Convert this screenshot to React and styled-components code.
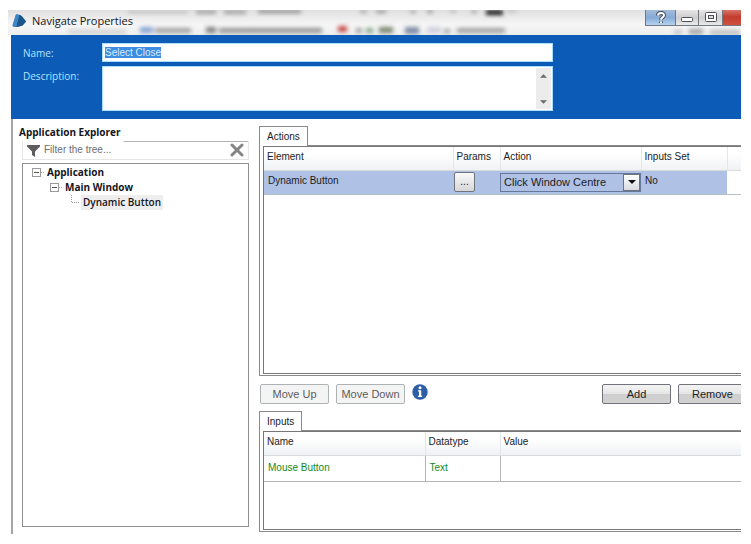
import React, { useState } from 'react'
import styled, { createGlobalStyle, css } from 'styled-components'

const GlobalStyle = createGlobalStyle`
  * {
    box-sizing: border-box;
  }
  body {
    margin: 0;
    background: #fff;
    color: #1c1c24;
    font: 10px/16px 'Liberation Sans', Arial, sans-serif;
  }
  button, input, textarea, select {
    font: inherit;
    color: inherit;
    margin: 0;
    border-radius: 0;
  }
`

const segoe = css`
  font-family: 'Open Sans', 'Noto Sans', sans-serif;
`

const Page = styled.div`
  display: flex;
  min-height: 100vh;
  padding: 10px 10px 10px 8px;
`

const Window = styled.main`
  flex: 1;
  min-width: 0;
  display: flex;
  flex-direction: column;
  overflow: hidden;
`

const TitleBar = styled.header`
  position: relative;
  display: flex;
  height: 25px;
  padding-left: 4px;
  background: linear-gradient(#e0e0e0, #f6f6f6 60%, #ededed);
`

const Glass = styled.svg`
  position: absolute;
  top: 0;
  left: 0;
  width: 733px;
  height: 25px;
`

const Title = styled.h1`
  ${segoe}
  position: relative;
  flex: 1;
  display: flex;
  gap: 6px;
  margin: 0;
  padding-top: 3px;
  font-size: 11px;
  line-height: 16px;
  font-weight: 500;
  color: #15151c;
`

const WindowButtons = styled.div`
  position: relative;
  display: flex;
  height: 16px;
`

const tones = {
  help: 'linear-gradient(#a3bbd9, #86abd6 50%, #b4d3f0)',
  plain: 'linear-gradient(#e6e6e6, #cfcfcf 50%, #e9e9e9)',
  close: 'linear-gradient(#d9746a, #c33c2f 45%, #cf5140)',
}

const WindowButton = styled.button`
  display: flex;
  align-items: center;
  justify-content: center;
  width: ${props => props.$width}px;
  padding: 0;
  border: 1px solid #737880;
  border-width: 0 0 1px 1px;
  background: ${props => tones[props.$tone]};
`

const Banner = styled.section`
  display: grid;
  grid-template-columns: 79px minmax(0, 451px);
  row-gap: 4px;
  margin-left: 3px;
  padding: 8px 12px;
  background: #0b5bb7;
`

const BannerLabel = styled.label`
  ${segoe}
  padding-top: 2px;
  font-size: 10px;
  font-weight: 500;
  color: #b4e3ff;
`

const NameInput = styled.input`
  width: 100%;
  height: 19px;
  padding: 0 2px;
  border: 1px solid #a8e0fb;
  background: #fff;
  outline: 0;
  color: #15151c;
  &::selection {
    background: #3c8ce0;
    color: #d4ecff;
  }
`

const DescriptionBox = styled.div`
  display: flex;
  height: 45px;
  padding: 1px;
  border: 1px solid #a8e0fb;
  background: #fff;
`

const Description = styled.textarea`
  flex: 1;
  min-width: 0;
  padding: 2px;
  border: 0;
  outline: 0;
  resize: none;
  overflow: hidden;
`

const ScrollBar = styled.div`
  display: flex;
  flex-direction: column;
  justify-content: space-between;
  width: 15px;
  background: #ececec;
`

const ScrollButton = styled.button`
  display: flex;
  align-items: center;
  justify-content: center;
  height: 15px;
  padding: 0;
  border: 0;
  background: none;
`

const Body = styled.div`
  flex: 1;
  display: grid;
  grid-template-columns: 236px minmax(0, 1fr);
  gap: 10px;
  margin-left: 3px;
  border-left: 2px solid #a6a6a6;
`

const Explorer = styled.section`
  display: flex;
  flex-direction: column;
  padding: 5px 0 7px 9px;
`

const Heading = styled.h2`
  ${segoe}
  margin: 0 0 1px -3px;
  font-size: 10px;
  line-height: 16px;
  font-weight: 700;
  color: #15151c;
`

const Filter = styled.div`
  display: flex;
  align-items: center;
  height: 19px;
  margin-bottom: 3px;
  padding: 0 4px;
  border: 1px solid #e6e6e6;
  border-top: 0;
  background: linear-gradient(90deg, #fff 100px, #b5b5b5 101px) top / 100% 1px no-repeat;
`

const FilterInput = styled.input`
  flex: 1;
  min-width: 0;
  padding: 0 4px;
  border: 0;
  outline: 0;
  background: none;
  &::placeholder {
    color: #6d6d6d;
    opacity: 1;
  }
`

const IconButton = styled.button`
  display: flex;
  padding: 0;
  border: 0;
  background: none;
`

const TreeBox = styled.div`
  flex: 1;
  padding: 1px 8px;
  border: 1px solid #8f8f8f;
`

const Branch = styled.ul`
  margin: 0;
  padding: 0 0 0 ${props => (props.$root ? 0 : 18)}px;
  list-style: none;
`

const Leaf = styled.div`
  ${segoe}
  display: flex;
  align-items: center;
  gap: 1px;
  height: 15px;
  font-size: 10px;
  font-weight: ${props => (props.$selected ? 600 : 700)};
  color: #15151c;
  span {
    padding: 0 2px;
    line-height: 15px;
    background: ${props => (props.$selected ? '#eeeeee' : 'none')};
  }
`

const Details = styled.section`
  display: flex;
  flex-direction: column;
  margin-right: -6px;
  padding: 7px 0 2px;
`

const Tab = styled.button`
  position: relative;
  align-self: flex-start;
  height: 20px;
  margin-bottom: -1px;
  padding: 0 7px;
  border: 1px solid #8a8a8a;
  border-bottom: 0;
  background: #fff;
`

const TabPanel = styled.div`
  display: flex;
  flex: ${props => (props.$grow ? '1' : '0 0 102px')};
  padding: 0 3px 1px 3px;
  border: 1px solid #8a8a8a;
`

const Sheet = styled.div`
  flex: 1;
  min-width: 0;
  border: 1px solid #777;
  overflow: hidden;
`

const Table = styled.table`
  width: 100%;
  border-collapse: collapse;
  table-layout: fixed;
`

const HeadCell = styled.th`
  width: ${props => (props.$width ? props.$width + 'px' : 'auto')};
  height: 23px;
  padding: 0 3px 2px;
  border-right: 1px solid #e4e6e8;
  border-bottom: 1px solid #d9dcdf;
  background: linear-gradient(#fff 30%, #eff1f3);
  font-weight: 400;
  text-align: left;
  &:last-child {
    border-right: 0;
  }
`

const ActionCell = styled.td`
  height: 24px;
  padding: ${props => (props.$control ? '0' : '0 4px 2px')};
  border-bottom: 1px solid #b9bdc6;
  background: ${props => (props.$blank ? '#fff' : '#b0c1e6')};
`

const InputCell = styled.td`
  height: 26px;
  padding: 0 4px;
  border-right: 1px solid #b4b4b4;
  border-bottom: 1px solid #b4b4b4;
  color: #128a1c;
`

const ParamsButton = styled.button`
  display: block;
  width: 21px;
  height: 20px;
  margin-left: 1px;
  padding: 0;
  border: 1px solid #6f747c;
  border-radius: 2px;
  background: linear-gradient(#fafafa, #d6d6d9);
  line-height: 14px;
`

const SelectWrap = styled.div`
  position: relative;
  height: 19px;
`

const ActionSelect = styled.select`
  display: block;
  width: 100%;
  height: 19px;
  padding: 0 20px 2px 3px;
  border: 1px solid #66779c;
  background: transparent;
  font-size: 11px;
  outline: 0;
  appearance: none;
`

/* sits over the right end of the select, clicks go through to it */
const SelectArrow = styled.span`
  position: absolute;
  top: 1px;
  right: 1px;
  display: flex;
  align-items: center;
  justify-content: center;
  width: 17px;
  height: 17px;
  border: 1px solid #6f747c;
  background: linear-gradient(#fff, #d9dbe0);
  pointer-events: none;
`

const ButtonRow = styled.div`
  display: flex;
  align-items: flex-start;
  gap: 7px;
  padding: 8px 0 7px 1px;
`

const Button = styled.button`
  width: 69px;
  height: 20px;
  padding: 0;
  border: 1px solid #70747a;
  border-radius: 2px;
  background: linear-gradient(#f4f4f4, #e6e6e6 48%, #cecece 52%, #d2d2d2);
  font-size: 11px;
  &:disabled {
    border-color: #adb2b5;
    background: #f4f4f4;
    color: #5c5c5c;
  }
`

const Spacer = styled.div`
  flex: 1;
`

const Triangle = ({ up, size = 7, color = '#6a6a6a' }) => (
  <svg width={size} height="4" viewBox="0 0 8 4" aria-hidden="true">
    <path d={up ? 'M0 4L4 0L8 4Z' : 'M0 0H8L4 4Z'} fill={color} />
  </svg>
)

const Logo = () => (
  <svg width="14" height="15" viewBox="0 0 14 15" aria-hidden="true">
    <path d="M4 1.5Q8 1 10 3.5L14 8.5L10.5 12.5Q5 14.5 2 14L0.5 12.5Z" fill="#1c5c97" />
    <path d="M4 1.5Q6 1.2 7.5 2L4.5 13.8Q2 14.5 0.5 12.8Z" fill="#3f86c4" />
    <path d="M7.5 2Q9 2.2 10 3.5L14 8.5L10.5 12.5L4.5 13.8Z" fill="#1a558c" />
  </svg>
)

// toolbar of the window behind, showing through the title bar
const shapes = [
  [120, 1, 60, 2, '#aaa'], [188, 0, 20, 4, '#999'], [216, 0, 22, 4, '#999'],
  [250, 0, 43, 3, '#777'], [352, 0, 7, 3, '#999'], [368, 0, 10, 3, '#888'],
  [402, 0, 6, 3, '#999'], [419, 0, 6, 3, '#888'], [442, 0, 6, 2, '#999'],
  [463, 0, 6, 3, '#999'], [478, 0, 17, 5, '#000'], [499, 0, 10, 2, '#aaa'],
  [60, 20, 58, 4, '#ccc'], [132, 17, 13, 6, '#7f9bd0'], [147, 18, 36, 5, '#999'],
  [198, 17, 10, 6, '#777'], [211, 18, 103, 5, '#8c8c8c'],
  [330, 16, 9, 6, '#c23c3c'], [348, 18, 6, 5, '#999'], [358, 18, 7, 5, '#79a079'],
  [371, 17, 14, 6, '#6f7c62'], [397, 17, 14, 7, '#71829c'], [419, 17, 14, 6, '#ccd'],
  [436, 19, 6, 4, '#999'], [449, 18, 48, 5, '#999'],
  [666, 20, 8, 4, '#bbb'], [681, 19, 14, 5, '#999'], [702, 20, 30, 5, '#bbb'],
]

const GlassShapes = () => (
  <Glass viewBox="0 0 733 25" aria-hidden="true">
    <filter id="glass" x="-5%" y="-50%" width="110%" height="200%">
      <feGaussianBlur stdDeviation="2 2" />
    </filter>
    <g filter="url(#glass)">
      {shapes.map(([x, y, w, h, fill]) => (
        <rect key={`${x}-${y}`} x={x} y={y} width={w} height={h} fill={fill} opacity=".9" />
      ))}
    </g>
  </Glass>
)

const Expander = () => (
  <svg width="13" height="15" viewBox="0 0 13 15" shapeRendering="crispEdges" aria-hidden="true">
    <rect x="1.5" y="3.5" width="8" height="8" fill="#fff" stroke="#9a9a9a" />
    <path d="M3 7.5H8" stroke="#555" />
    <path d="M10 7.5H13" stroke="#aaa" strokeDasharray="1 1" />
  </svg>
)

const Elbow = () => (
  <svg width="13" height="15" viewBox="0 0 13 15" shapeRendering="crispEdges" aria-hidden="true">
    <path d="M4.5 0V7.5H13" fill="none" stroke="#999" strokeDasharray="1 1" />
  </svg>
)

const App = () => {
  const [name, setName] = useState('Select Close')
  const [description, setDescription] = useState('')
  const [filter, setFilter] = useState('')

  return (
    <Page>
      <GlobalStyle />
      <Window>
        <TitleBar>
          <GlassShapes />
          <Title>
            <Logo />
            Navigate Properties
          </Title>
          <WindowButtons>
            <WindowButton $width={30} $tone="help" aria-label="Help">
              <svg width="12" height="14" viewBox="0 0 12 14">
                <path d="M3 4.5C3 1.2 9 1.2 9 4.2C9 6.5 6 6.2 6 8.8M6 10.4V12" fill="none" stroke="#454b57" strokeWidth="4" />
                <path d="M3 4.5C3 1.2 9 1.2 9 4.2C9 6.5 6 6.2 6 8.8M6 10.4V12" fill="none" stroke="#fff" strokeWidth="2" />
              </svg>
            </WindowButton>
            <WindowButton $width={23} $tone="plain" aria-label="Minimize">
              <svg width="13" height="12" viewBox="0 0 13 12">
                <rect x="0.5" y="5.5" width="11" height="4" rx="1" fill="#fff" stroke="#4c4f55" />
              </svg>
            </WindowButton>
            <WindowButton $width={24} $tone="plain" aria-label="Maximize">
              <svg width="12" height="14" viewBox="0 0 12 14">
                <rect x="0.5" y="1.5" width="11" height="9" rx="1" fill="#fff" stroke="#4c4f55" />
                <rect x="3.5" y="4.5" width="5" height="3" fill="#ddd" stroke="#4c4f55" />
              </svg>
            </WindowButton>
            <WindowButton $width={19} $tone="close" aria-label="Close" />
          </WindowButtons>
        </TitleBar>

        <Banner>
          <BannerLabel htmlFor="name">Name:</BannerLabel>
          <NameInput
            id="name"
            value={name}
            autoFocus
            onFocus={e => e.target.select()}
            onChange={e => setName(e.target.value)}
          />
          <BannerLabel htmlFor="description">Description:</BannerLabel>
          <DescriptionBox>
            <Description
              id="description"
              value={description}
              onChange={e => setDescription(e.target.value)}
            />
            <ScrollBar>
              <ScrollButton aria-label="Scroll up"><Triangle up /></ScrollButton>
              <ScrollButton aria-label="Scroll down"><Triangle /></ScrollButton>
            </ScrollBar>
          </DescriptionBox>
        </Banner>

        <Body>
          <Explorer>
            <Heading>Application Explorer</Heading>
            <Filter>
              <svg width="13" height="13" viewBox="0 0 13 13" aria-hidden="true">
                <path d="M0 1H13V2.5L8 7.5V13L5 11V7.5L0 2.5Z" fill="#5d5d5d" />
              </svg>
              <FilterInput
                aria-label="Filter the tree"
                placeholder="Filter the tree..."
                value={filter}
                onChange={e => setFilter(e.target.value)}
              />
              <IconButton aria-label="Clear filter" onClick={() => setFilter('')}>
                <svg width="14" height="14" viewBox="0 0 14 14">
                  <path d="M2 2L12 12M12 2L2 12" stroke="#858585" strokeWidth="3" strokeLinecap="round" />
                </svg>
              </IconButton>
            </Filter>
            <TreeBox>
              <Branch $root>
                <li>
                  <Leaf><Expander /><span>Application</span></Leaf>
                  <Branch>
                    <li>
                      <Leaf><Expander /><span>Main Window</span></Leaf>
                      <Branch>
                        <li>
                          <Leaf $selected><Elbow /><span>Dynamic Button</span></Leaf>
                        </li>
                      </Branch>
                    </li>
                  </Branch>
                </li>
              </Branch>
            </TreeBox>
          </Explorer>

          <Details>
            <Tab>Actions</Tab>
            <TabPanel $grow>
              <Sheet>
                <Table>
                  <thead>
                    <tr>
                      <HeadCell $width={189}>Element</HeadCell>
                      <HeadCell $width={47}>Params</HeadCell>
                      <HeadCell $width={141}>Action</HeadCell>
                      <HeadCell>Inputs Set</HeadCell>
                      <HeadCell $width={15} aria-hidden="true" />
                    </tr>
                  </thead>
                  <tbody>
                    <tr>
                      <ActionCell>Dynamic Button</ActionCell>
                      <ActionCell $control>
                        <ParamsButton aria-label="Edit params">...</ParamsButton>
                      </ActionCell>
                      <ActionCell $control>
                        <SelectWrap>
                          <ActionSelect aria-label="Action" defaultValue="centre">
                            <option value="centre">Click Window Centre</option>
                          </ActionSelect>
                          <SelectArrow><Triangle size={8} color="#111" /></SelectArrow>
                        </SelectWrap>
                      </ActionCell>
                      <ActionCell>No</ActionCell>
                      <ActionCell $blank />
                    </tr>
                  </tbody>
                </Table>
              </Sheet>
            </TabPanel>

            <ButtonRow>
              <Button disabled>Move Up</Button>
              <Button disabled>Move Down</Button>
              <IconButton aria-label="Information">
                <svg width="16" height="16" viewBox="0 0 16 16">
                  <circle cx="8" cy="8" r="7.7" fill="#2c5fa5" />
                  <circle cx="8" cy="3.8" r="1.5" fill="#fff" />
                  <path d="M6 6.2H9.2V11.8H10.2V13H6V11.8H7V7.4H6Z" fill="#fff" />
                </svg>
              </IconButton>
              <Spacer />
              <Button>Add</Button>
              <Button>Remove</Button>
            </ButtonRow>

            <Tab>Inputs</Tab>
            <TabPanel>
              <Sheet>
                <Table>
                  <thead>
                    <tr>
                      <HeadCell $width={161}>Name</HeadCell>
                      <HeadCell $width={75}>Datatype</HeadCell>
                      <HeadCell>Value</HeadCell>
                    </tr>
                  </thead>
                  <tbody>
                    <tr>
                      <InputCell>Mouse Button</InputCell>
                      <InputCell>Text</InputCell>
                      <InputCell />
                    </tr>
                  </tbody>
                </Table>
              </Sheet>
            </TabPanel>
          </Details>
        </Body>
      </Window>
    </Page>
  )
}

export default App
